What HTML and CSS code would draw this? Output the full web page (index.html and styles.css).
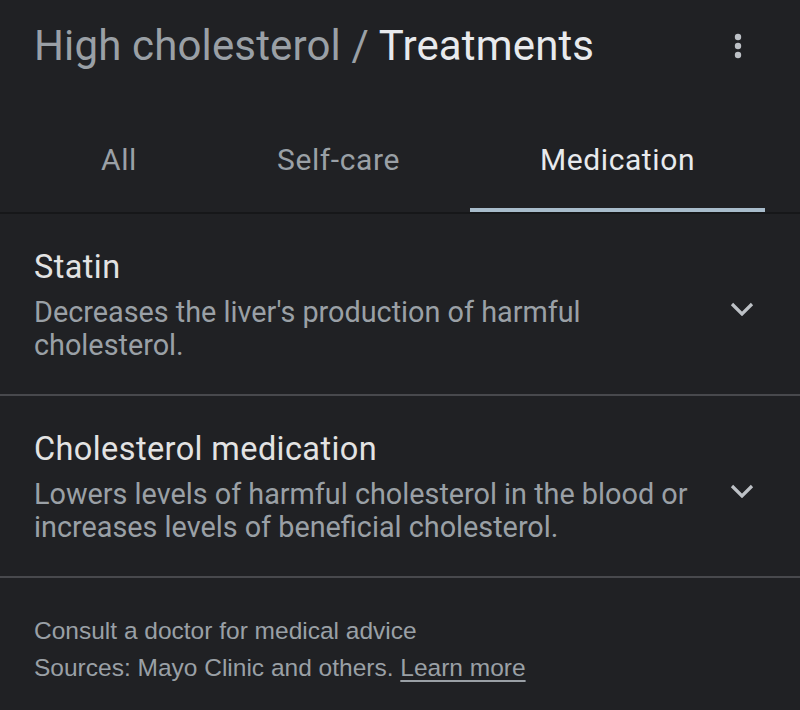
FILE: index.html
```html
<!DOCTYPE html>
<html>
<head>
<meta charset="utf-8">
<link rel="stylesheet" href="styles.css">
</head>
<body>
<div class="page">
  <header class="header">
    <h1 class="title"><span class="crumb">High cholesterol / </span><span class="current">Treatments</span></h1>
    <button class="more" aria-label="More options">
      <svg width="8" height="26" viewBox="0 0 8 26"><circle cx="4" cy="4" r="3.2" fill="#bdc1c6"/><circle cx="4" cy="13" r="3.2" fill="#bdc1c6"/><circle cx="4" cy="22" r="3.2" fill="#bdc1c6"/></svg>
    </button>
  </header>
  <nav class="tabs">
    <div class="tab">All</div>
    <div class="tab">Self-care</div>
    <div class="tab active">Medication</div>
  </nav>
  <div class="item">
    <div class="item-text">
      <div class="item-title">Statin</div>
      <div class="item-desc">Decreases the liver's production of harmful cholesterol.</div>
    </div>
    <svg class="chev" width="24" height="14" viewBox="0 0 24 14"><path d="M2 2 L12 12 L22 2" fill="none" stroke="#bdc1c6" stroke-width="3.2"/></svg>
  </div>
  <div class="item">
    <div class="item-text">
      <div class="item-title">Cholesterol medication</div>
      <div class="item-desc">Lowers levels of harmful cholesterol in the blood or increases levels of beneficial cholesterol.</div>
    </div>
    <svg class="chev" width="24" height="14" viewBox="0 0 24 14"><path d="M2 2 L12 12 L22 2" fill="none" stroke="#bdc1c6" stroke-width="3.2"/></svg>
  </div>
  <footer class="footer">
    <div>Consult a doctor for medical advice</div>
    <div>Sources: Mayo Clinic and others. <a class="learn" href="#">Learn more</a></div>
  </footer>
</div>
</body>
</html>
```

FILE: styles.css
```css
html, body {
  margin: 0;
  padding: 0;
  background: #202124;
}
.page {
  width: 800px;
  height: 710px;
  overflow: hidden;
  font-family: Roboto, "Liberation Sans", sans-serif;
}
.header {
  display: flex;
  align-items: center;
  justify-content: space-between;
  padding: 22px 58px 0 34px;
  height: 48px;
}
.title {
  margin: 0;
  font-size: 42px;
  font-weight: 400;
  line-height: 48px;
  letter-spacing: 0.15px;
  white-space: nowrap;
}
.crumb { color: #9aa0a6; }
.current { color: #e8eaed; }
.more {
  background: none;
  border: 0;
  padding: 0;
  display: flex;
}
.tabs {
  display: flex;
  margin-top: 44px;
  padding-left: 31px;
  border-bottom: 2px solid #161719;
}
.tab {
  padding: 0 70px 3px;
  height: 98px;
  display: flex;
  align-items: center;
  justify-content: center;
  font-size: 30px;
  color: #9aa0a6;
  box-sizing: border-box;
  border-bottom: 4px solid transparent;
  letter-spacing: 0.6px;
}
.tab.active {
  color: #e8eaed;
  border-bottom-color: #a8bccb;
}
.item {
  display: flex;
  align-items: flex-start;
  justify-content: space-between;
  padding: 34px 46px 32px 34px;
  border-bottom: 2px solid #48494d;
}
.item-title {
  font-size: 32.5px;
  color: #e3e3e3;
  line-height: 38px;
  margin-bottom: 10px;
  letter-spacing: 0.4px;
}
.item-desc {
  font-size: 28.8px;
  color: #9aa0a6;
  line-height: 33px;
  width: 670px;
}
.chev {
  display: block;
  margin-top: 54px;
}
.footer {
  padding: 34px 34px 0;
  font-family: "Liberation Sans", Arial, sans-serif;
  font-size: 24.5px;
  line-height: 37px;
  color: #9aa0a6;
}
.learn {
  color: #9aa0a6;
  text-decoration: underline;
  text-underline-offset: 4px;
}
```
